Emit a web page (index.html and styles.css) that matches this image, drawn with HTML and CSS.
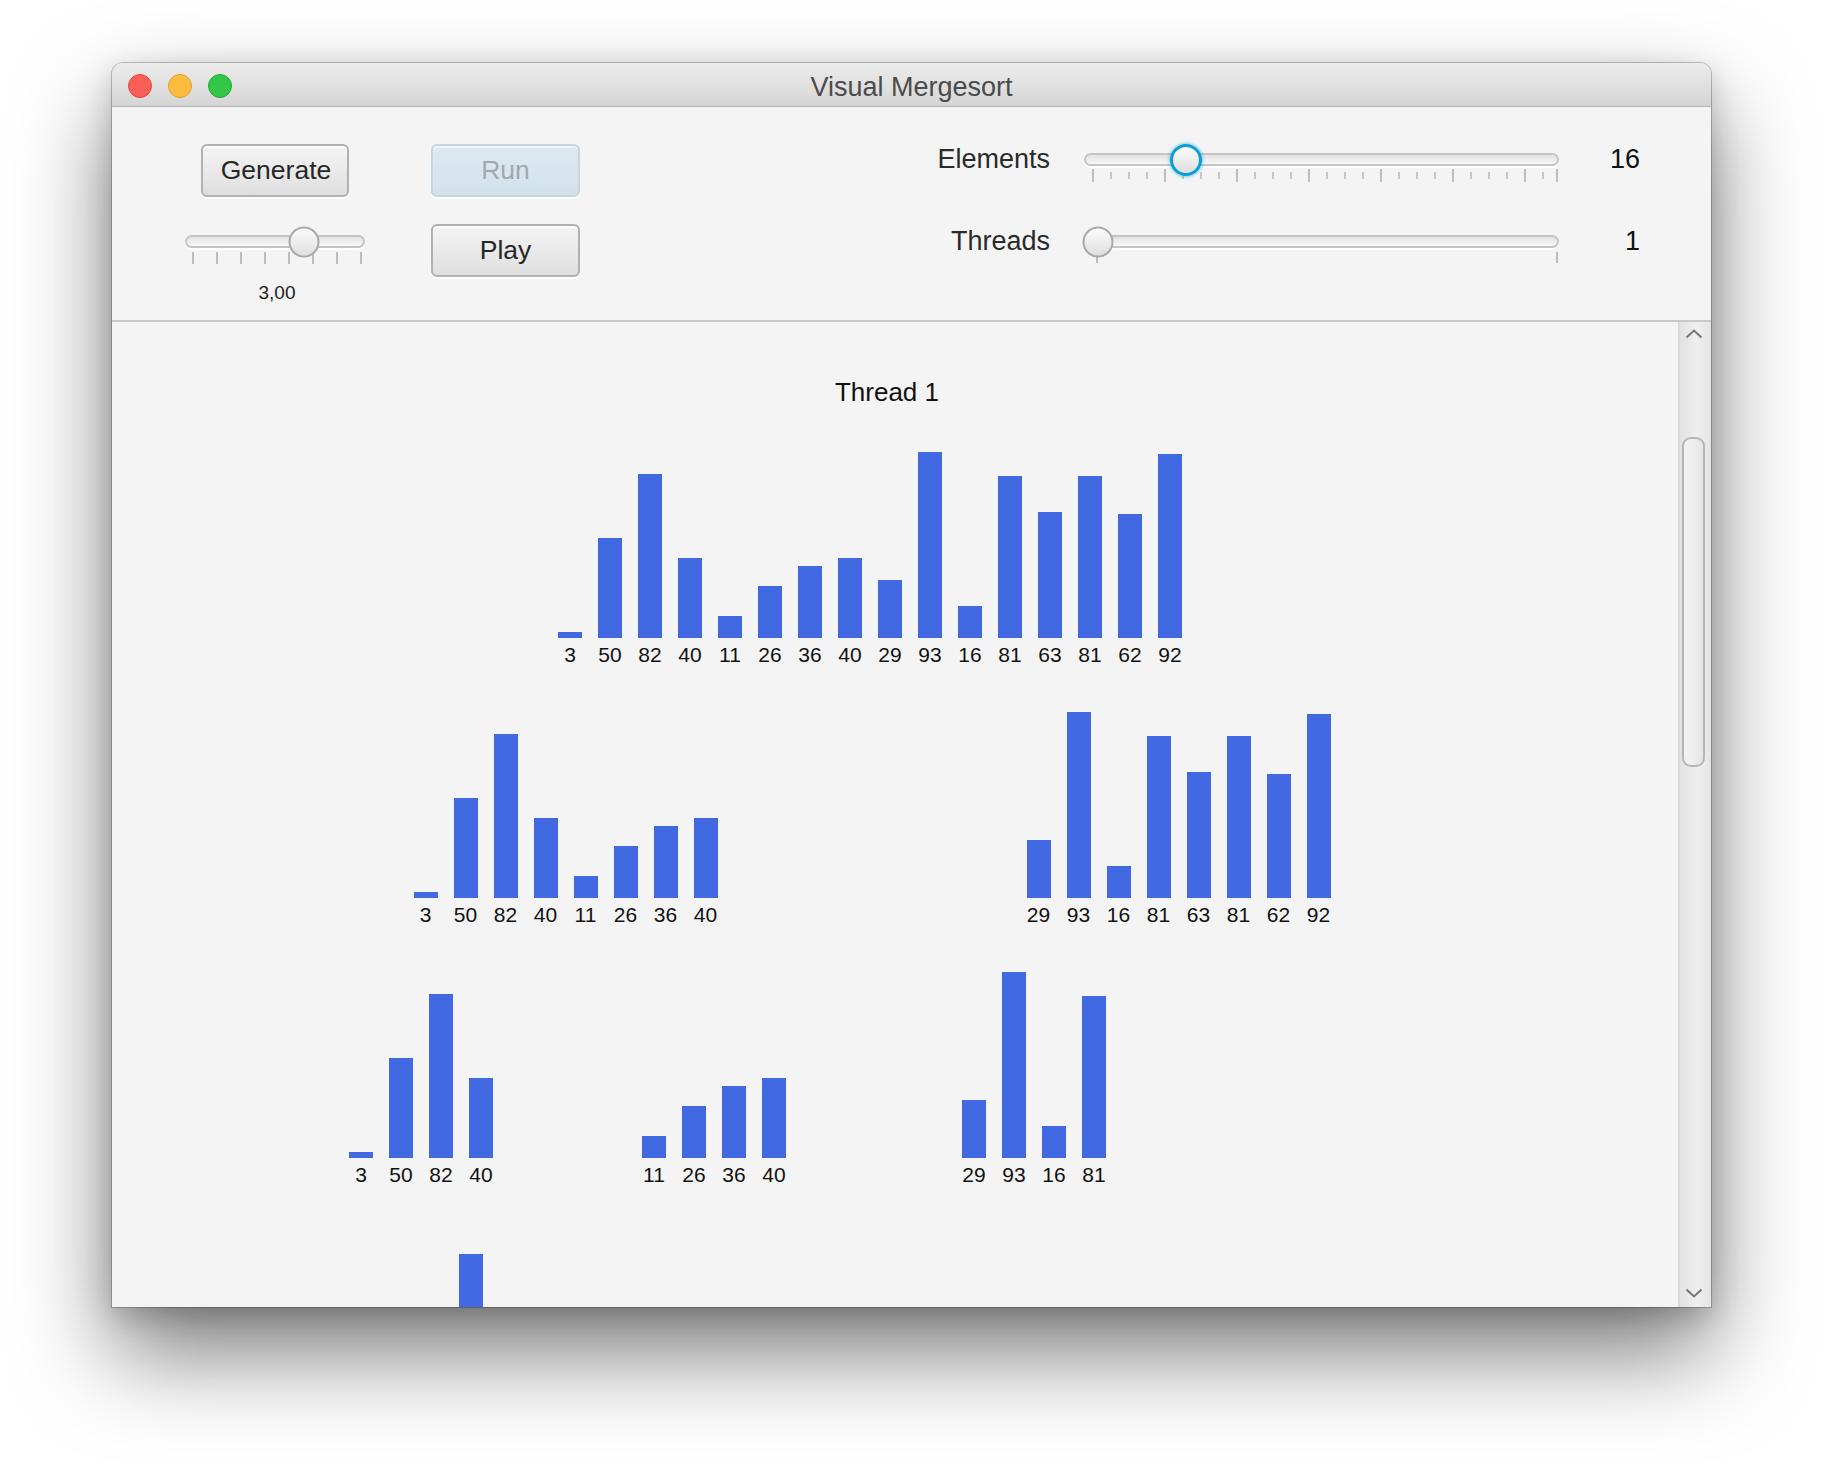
FILE: index.html
```html
<!DOCTYPE html>
<html>
<head>
<meta charset="utf-8">
<title>Visual Mergesort</title>
<link rel="stylesheet" href="styles.css">
</head>
<body>
<div class="window">
  <div class="titlebar">
    <div class="lights">
      <span class="light red"></span>
      <span class="light yellow"></span>
      <span class="light green"></span>
    </div>
    <div class="wtitle">Visual Mergesort</div>
    <div></div>
  </div>

  <div class="controls">
    <div class="left">
      <div class="col1">
        <div class="btn gen">Generate</div>
        <div class="slider mini">
          <div class="track"><div class="thumb" style="left:117px"></div></div>
          <div class="ticks mini-ticks"></div>
          <div class="ticklabel">3,00</div>
        </div>
      </div>
      <div class="col2">
        <div class="btn run">Run</div>
        <div class="btn">Play</div>
      </div>
    </div>

    <div class="params">
      <div class="plabel">Elements</div>
      <div class="slider wide">
        <div class="track"><div class="thumb focused" style="left:100px"></div></div>
        <div class="ticks el-ticks"></div>
      </div>
      <div class="pvalue">16</div>

      <div class="plabel">Threads</div>
      <div class="slider wide">
        <div class="track"><div class="thumb" style="left:12px"></div></div>
        <div class="ticks th-ticks"></div>
      </div>
      <div class="pvalue">1</div>
    </div>
  </div>

  <div class="pane">
    <div class="viewport">
      <div class="ttitle">Thread 1</div>
      <div class="tree">
        <div class="node n16">
          <div class="bars">
            <span class="bar" style="height:6px"></span>
            <span class="bar" style="height:100px"></span>
            <span class="bar" style="height:164px"></span>
            <span class="bar" style="height:80px"></span>
            <span class="bar" style="height:22px"></span>
            <span class="bar" style="height:52px"></span>
            <span class="bar" style="height:72px"></span>
            <span class="bar" style="height:80px"></span>
            <span class="bar" style="height:58px"></span>
            <span class="bar" style="height:186px"></span>
            <span class="bar" style="height:32px"></span>
            <span class="bar" style="height:162px"></span>
            <span class="bar" style="height:126px"></span>
            <span class="bar" style="height:162px"></span>
            <span class="bar" style="height:124px"></span>
            <span class="bar" style="height:184px"></span>
          </div>
          <div class="labels">
            <span>3</span><span>50</span><span>82</span><span>40</span><span>11</span><span>26</span><span>36</span><span>40</span>
            <span>29</span><span>93</span><span>16</span><span>81</span><span>63</span><span>81</span><span>62</span><span>92</span>
          </div>
          <div class="kids">
            <div class="node n8">
              <div class="bars">
                <span class="bar" style="height:6px"></span>
                <span class="bar" style="height:100px"></span>
                <span class="bar" style="height:164px"></span>
                <span class="bar" style="height:80px"></span>
                <span class="bar" style="height:22px"></span>
                <span class="bar" style="height:52px"></span>
                <span class="bar" style="height:72px"></span>
                <span class="bar" style="height:80px"></span>
              </div>
              <div class="labels">
                <span>3</span><span>50</span><span>82</span><span>40</span><span>11</span><span>26</span><span>36</span><span>40</span>
              </div>
              <div class="kids">
                <div class="node n4">
                  <div class="bars">
                    <span class="bar" style="height:6px"></span>
                    <span class="bar" style="height:100px"></span>
                    <span class="bar" style="height:164px"></span>
                    <span class="bar" style="height:80px"></span>
                  </div>
                  <div class="labels"><span>3</span><span>50</span><span>82</span><span>40</span></div>
                  <div class="kids">
                    <div class="node n2">
                      <div class="bars">
                        <span class="bar" style="height:6px"></span>
                        <span class="bar" style="height:100px"></span>
                      </div>
                    </div>
                    <div class="node n2">
                      <div class="bars">
                        <span class="bar" style="height:164px"></span>
                        <span class="bar" style="height:80px"></span>
                      </div>
                    </div>
                  </div>
                </div>
                <div class="node n4">
                  <div class="bars">
                    <span class="bar" style="height:22px"></span>
                    <span class="bar" style="height:52px"></span>
                    <span class="bar" style="height:72px"></span>
                    <span class="bar" style="height:80px"></span>
                  </div>
                  <div class="labels"><span>11</span><span>26</span><span>36</span><span>40</span></div>
                </div>
              </div>
            </div>
            <div class="node n8">
              <div class="bars">
                <span class="bar" style="height:58px"></span>
                <span class="bar" style="height:186px"></span>
                <span class="bar" style="height:32px"></span>
                <span class="bar" style="height:162px"></span>
                <span class="bar" style="height:126px"></span>
                <span class="bar" style="height:162px"></span>
                <span class="bar" style="height:124px"></span>
                <span class="bar" style="height:184px"></span>
              </div>
              <div class="labels">
                <span>29</span><span>93</span><span>16</span><span>81</span><span>63</span><span>81</span><span>62</span><span>92</span>
              </div>
              <div class="kids">
                <div class="node n4">
                  <div class="bars">
                    <span class="bar" style="height:58px"></span>
                    <span class="bar" style="height:186px"></span>
                    <span class="bar" style="height:32px"></span>
                    <span class="bar" style="height:162px"></span>
                  </div>
                  <div class="labels"><span>29</span><span>93</span><span>16</span><span>81</span></div>
                </div>
                <div class="node n4"></div>
              </div>
            </div>
          </div>
        </div>
      </div>
    </div>
    <div class="scrollbar">
      <div class="sb-btn sb-up">
        <svg width="18" height="10" viewBox="0 0 18 10"><path d="M1.5 8.5 L9 1.5 L16.5 8.5" fill="none" stroke="#767676" stroke-width="2"/></svg>
      </div>
      <div class="sb-thumb"></div>
      <div class="sb-fill"></div>
      <div class="sb-btn sb-down">
        <svg width="18" height="10" viewBox="0 0 18 10"><path d="M1.5 1.5 L9 8.5 L16.5 1.5" fill="none" stroke="#767676" stroke-width="2"/></svg>
      </div>
    </div>
  </div>
</div>
</body>
</html>
```

FILE: styles.css
```css
html, body {
  margin: 0;
  background: #ffffff;
}
body {
  width: 1824px;
  height: 1468px;
  box-sizing: border-box;
  padding: 63px 0 0 112px;
  overflow: hidden;
  font-family: "Liberation Sans", Arial, sans-serif;
  color: #222;
}

.window {
  width: 1599px;
  height: 1244px;
  display: flex;
  flex-direction: column;
  border-radius: 11px 11px 0 0;
  overflow: hidden;
  background: #f4f4f4;
  box-shadow: 0 0 0 1px rgba(0,0,0,0.22), 0 46px 95px rgba(0,0,0,0.52), 0 8px 28px rgba(0,0,0,0.18);
}

/* title bar */
.titlebar {
  height: 44px;
  flex: none;
  box-sizing: border-box;
  padding-top: 4px;
  border-bottom: 1px solid #b2b2b2;
  background: linear-gradient(#ececec, #d5d5d5);
  display: grid;
  grid-template-columns: 1fr auto 1fr;
  align-items: center;
}
.lights {
  display: flex;
  gap: 16px;
  margin-left: 16px;
  margin-top: -1px;
}
.light {
  width: 24px;
  height: 24px;
  border-radius: 50%;
  box-sizing: border-box;
}
.red { background: #fc5f57; border: 1px solid #e1453f; }
.yellow { background: #fdbc3e; border: 1px solid #dfa029; }
.green { background: #33c748; border: 1px solid #22aa32; }
.wtitle {
  font-size: 27px;
  line-height: 30px;
  color: #4b4b4b;
}

/* controls */
.controls {
  height: 213px;
  flex: none;
  box-sizing: border-box;
  padding: 37px 71px 0 73px;
  display: flex;
  justify-content: space-between;
  background: #f4f4f4;
}
.left {
  display: flex;
  gap: 66px;
}
.col1 {
  width: 180px;
  display: flex;
  flex-direction: column;
  align-items: center;
}
.col2 {
  width: 149px;
  display: flex;
  flex-direction: column;
  gap: 27px;
}
.btn {
  height: 53px;
  box-sizing: border-box;
  border: 2px solid #b1b1b1;
  border-radius: 6px;
  background: linear-gradient(#f4f4f4, #dfdfdf);
  box-shadow: inset 0 2px 0 rgba(255,255,255,0.75), 0 2px 0 rgba(255,255,255,0.9);
  display: flex;
  align-items: center;
  justify-content: center;
  font-size: 26.5px;
  color: #262626;
}
.gen { width: 148px; padding-left: 2px; }
.run {
  border-color: #c5d6e0;
  background: linear-gradient(#dce9f1, #d2e2eb);
  box-shadow: inset 0 2px 0 rgba(255,255,255,0.5), 0 2px 0 rgba(255,255,255,0.8);
  color: #a4a8ab;
}

/* sliders */
.slider { display: flex; flex-direction: column; }
.track {
  position: relative;
  height: 13px;
  box-sizing: border-box;
  border: 2px solid #c4c4c4;
  border-radius: 7px;
  background: linear-gradient(#e2e2e2, #f7f7f7);
  box-shadow: 0 2px 0 rgba(255,255,255,0.9);
}
.thumb {
  position: absolute;
  top: 50%;
  width: 31px;
  height: 31px;
  box-sizing: border-box;
  border: 2px solid #a9a9a9;
  border-radius: 50%;
  background: linear-gradient(#fcfcfc, #dedede);
  transform: translate(-50%, -50%);
}
.thumb.focused {
  width: 32px;
  height: 32px;
  border: 3px solid #079fd6;
  box-shadow: 0 0 3px 1px rgba(7,159,214,0.45);
}
.mini {
  width: 180px;
  margin-top: 38px;
}
.ticks { flex: none; }
.mini-ticks {
  width: 171px;
  height: 12px;
  margin: 4px 0 0 7px;
  background: linear-gradient(to right, #bdbdbd 0 2px, transparent 2px) 0 0 / 24px 100% repeat-x;
}
.ticklabel {
  margin-top: 18px;
  font-size: 19px;
  line-height: 22px;
  text-align: center;
  padding-left: 4px;
  color: #222;
}

.params {
  display: grid;
  grid-template-columns: auto 475px 81px;
  grid-template-rows: 82px 82px;
}
.plabel {
  font-size: 27px;
  line-height: 30px;
  text-align: right;
  padding-right: 34px;
  color: #2a2a2a;
}
.pvalue {
  font-size: 27px;
  line-height: 30px;
  text-align: right;
  color: #111;
}
.wide { padding-top: 9px; }
.el-ticks {
  width: 466px;
  height: 13px;
  margin: 3px 0 0 8px;
  background:
    linear-gradient(#bdbdbd, #bdbdbd) right 0 / 2px 100% no-repeat,
    linear-gradient(to right, #bdbdbd 0 2px, transparent 2px) 0 0 / 72px 100% repeat-x,
    linear-gradient(to right, #c6c6c6 0 2px, transparent 2px) 0 3px / 18px 7px repeat-x;
}
.th-ticks {
  width: 462px;
  height: 11px;
  margin: 4px 0 0 12px;
  box-sizing: border-box;
  border-left: 2px solid #bdbdbd;
  border-right: 2px solid #bdbdbd;
}

/* scroll pane */
.pane {
  flex: 1;
  min-height: 0;
  display: flex;
  border-top: 2px solid #c9c9c9;
}
.viewport {
  flex: 1;
  min-width: 0;
  overflow: hidden;
  display: flex;
  flex-direction: column;
  padding-top: 55px;
  background: #f4f4f4;
}
.ttitle {
  font-size: 26px;
  line-height: 30px;
  text-align: center;
  padding-right: 16px;
  color: #111;
}
.tree {
  display: flex;
  margin-left: 199px;
  margin-top: 31px;
}
.node {
  display: flex;
  flex-direction: column;
  align-items: center;
  flex: none;
}
.n8 { width: 501px; }
.n4 { width: 204px; }
.n2 { width: 64px; }
.bars {
  height: 200px;
  display: flex;
  align-items: flex-end;
  gap: 16px;
}
.bar {
  width: 24px;
  background: #4169e1;
  display: block;
}
.labels {
  display: flex;
  gap: 16px;
  margin-top: 5px;
  height: 24px;
}
.labels span {
  width: 24px;
  display: flex;
  justify-content: center;
  font-size: 21px;
  line-height: 24px;
  color: #111;
  white-space: nowrap;
}
.kids {
  display: flex;
  margin-top: 31px;
  margin-left: 4px;
}
.n16 > .kids { gap: 112px; }
.n8 > .kids { gap: 89px; }
.n4 > .kids { gap: 72px; }

.scrollbar {
  width: 33px;
  flex: none;
  box-sizing: border-box;
  border-left: 2px solid #dadada;
  padding-right: 4px;
  background: linear-gradient(to right, #e2e2e2, #efefef 55%, #e4e4e4);
  display: flex;
  flex-direction: column;
  align-items: center;
}
.sb-btn {
  display: flex;
  align-items: center;
  justify-content: center;
  width: 100%;
}
.sb-up { height: 24px; }
.sb-down { height: 29px; }
.sb-thumb {
  width: 23px;
  height: 330px;
  margin-top: 91px;
  box-sizing: border-box;
  border: 2px solid #b6b6b6;
  border-radius: 9px;
  background: linear-gradient(to right, #f4f4f4, #e6e6e6);
}
.sb-fill { flex: 1; }
```
